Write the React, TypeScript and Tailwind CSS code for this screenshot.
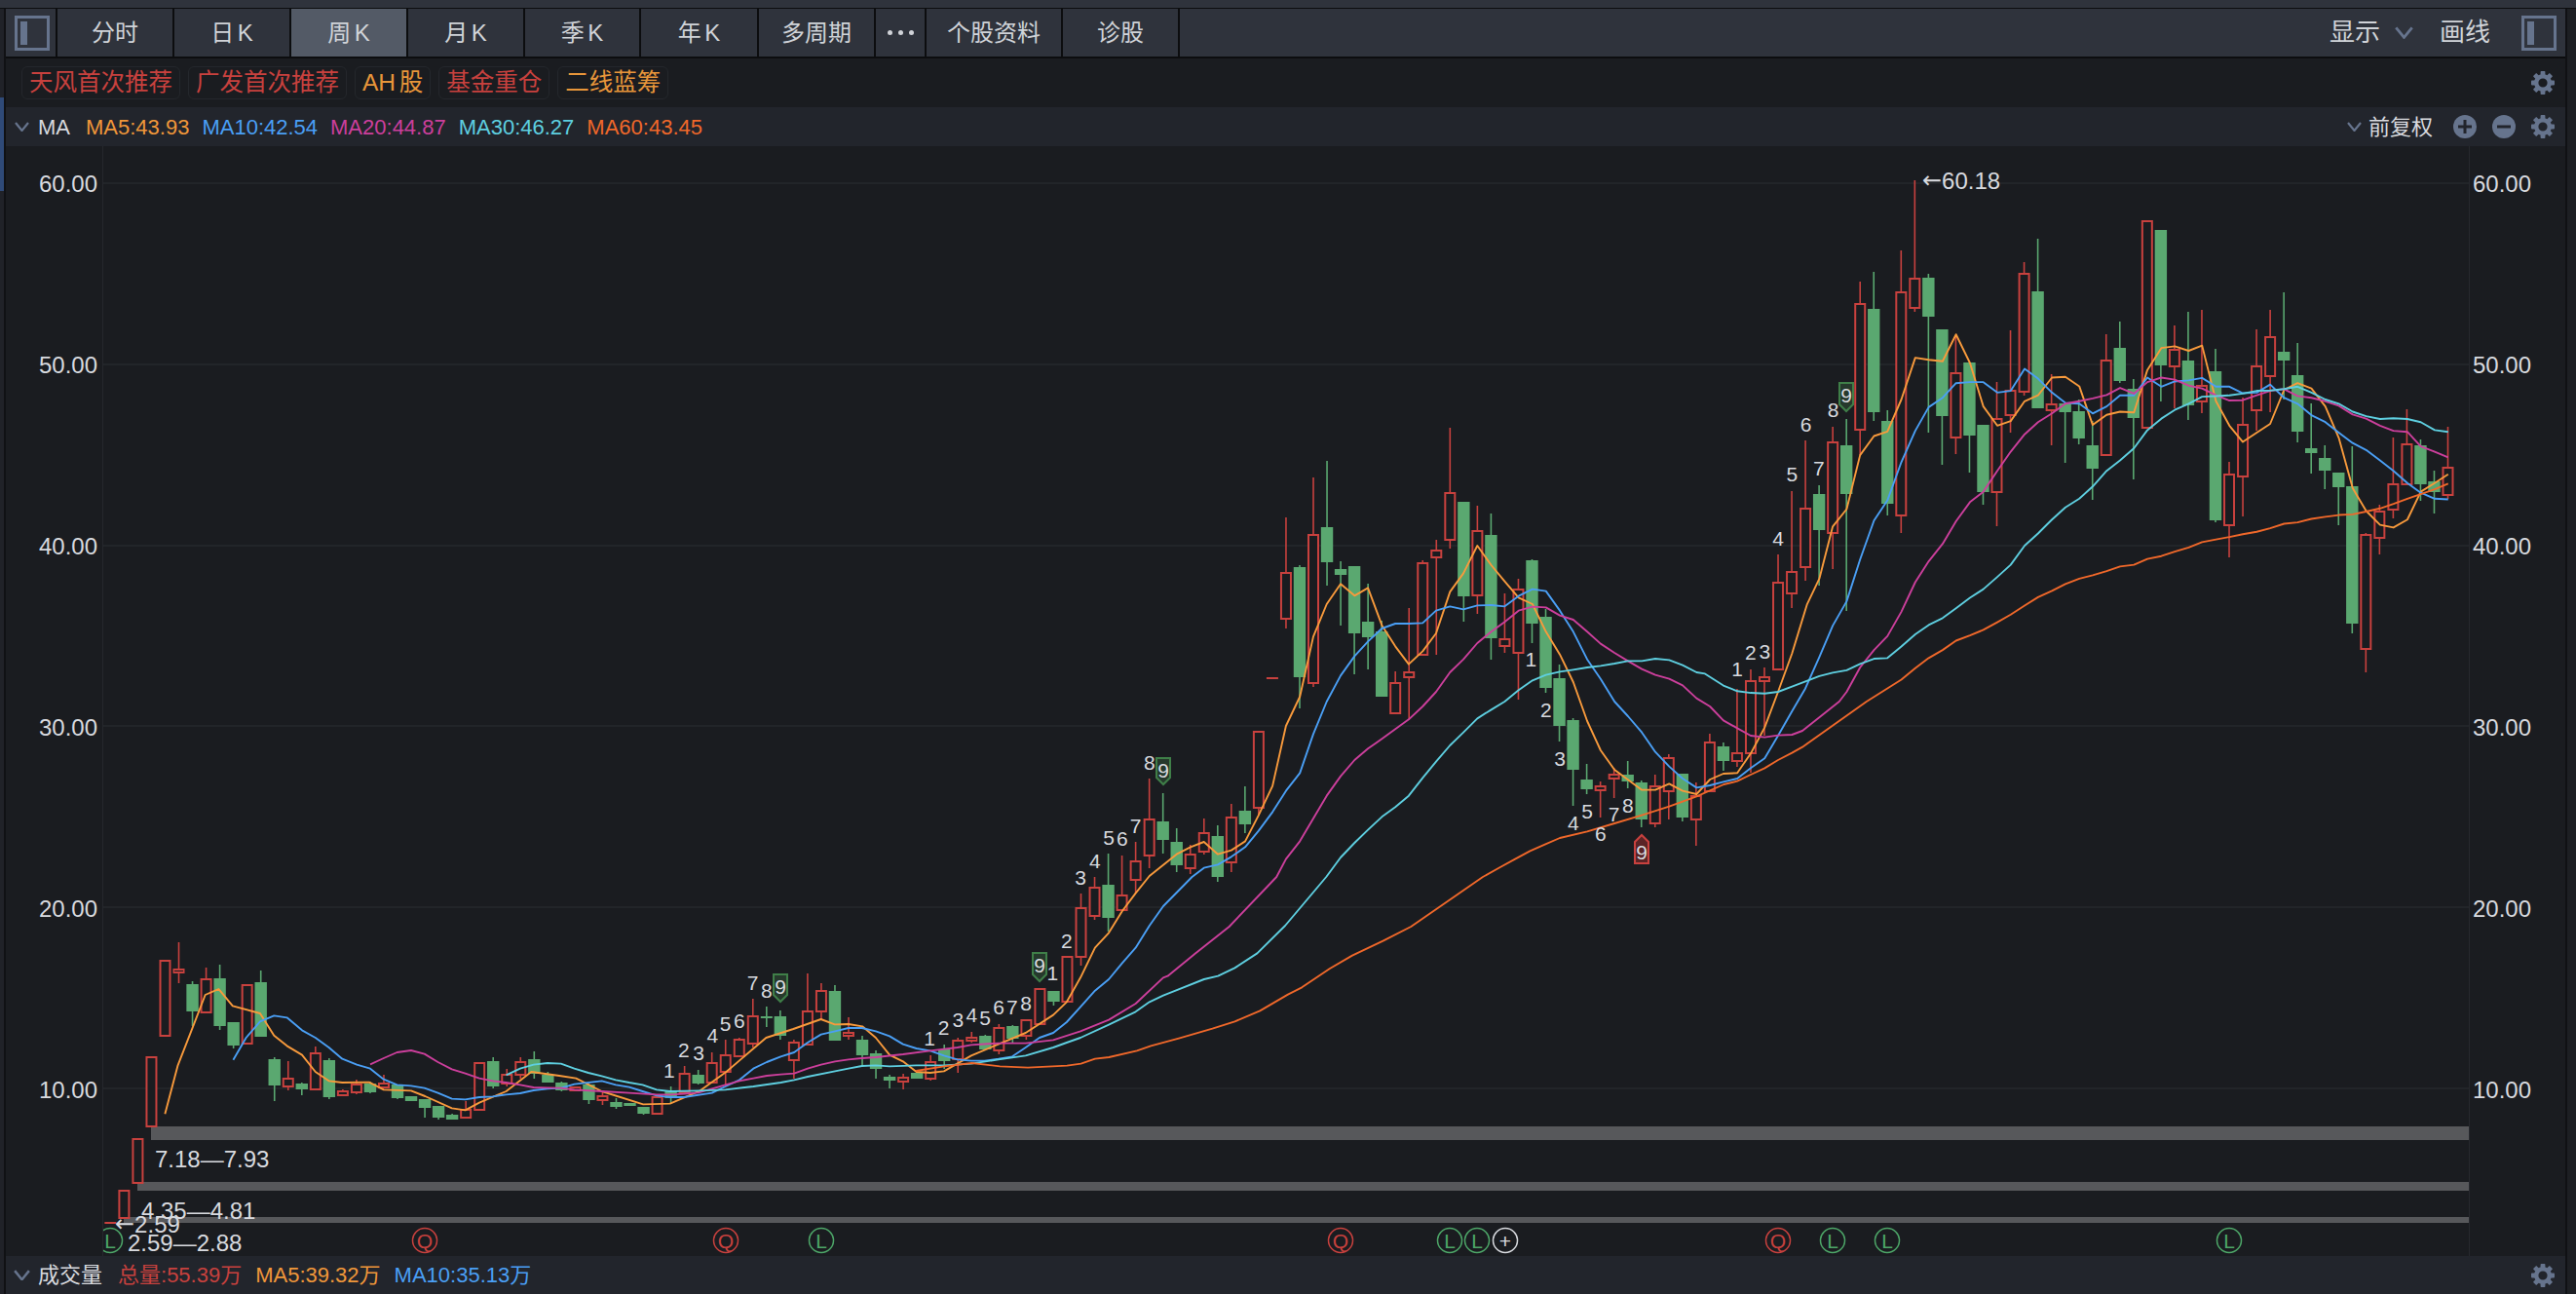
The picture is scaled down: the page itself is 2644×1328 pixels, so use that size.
const UP = "#c8413e";
const DOWN = "#5aa870";
const BG = "#1a1c20";
const INK = "#d8dadf";
const ICON = "#66748d";

type Candle = [string, number, number, number?, number?];

// first entry is the doji left of the first full bar; bars sit 14.03px apart
const candles: Candle[] = [
  ["r", 1254, 1256], ["r", 1222, 1250], ["r", 1169, 1214], ["r", 1085, 1156], ["r", 986, 1063],
  ["r", 995, 998, 967, 1009], ["g", 1010, 1038, 1007, 1053], ["r", 1005, 1039, 993, 1039], ["g", 1004, 1053, 990, 1057],
  ["g", 1049, 1073, 1049, 1076], ["r", 1011, 1071], ["g", 1008, 1064, 996, 1064], ["g", 1087, 1114, 1085, 1130],
  ["r", 1107, 1115, 1089, 1119], ["g", 1112, 1118, 1111, 1124], ["r", 1081, 1118, 1074, 1118], ["g", 1088, 1126, 1086, 1128],
  ["r", 1120, 1124, 1118, 1125], ["r", 1113, 1121, 1108, 1123], ["g", 1112, 1121, 1110, 1122], ["r", 1112, 1116, 1103, 1116],
  ["g", 1113, 1127, 1113, 1128], ["g", 1125, 1130], ["g", 1128, 1137, 1128, 1147], ["g", 1135, 1147, 1135, 1149],
  ["g", 1144, 1149, 1143, 1149], ["r", 1139, 1147, 1130, 1147], ["r", 1091, 1139], ["g", 1089, 1115, 1085, 1117],
  ["r", 1103, 1112, 1097, 1115], ["r", 1090, 1103, 1085, 1107], ["g", 1087, 1102, 1079, 1107], ["g", 1103, 1111, 1100, 1111],
  ["g", 1111, 1119, 1110, 1120], ["r", 1116, 1119, 1116, 1120], ["g", 1113, 1129, 1112, 1133], ["r", 1125, 1129, 1121, 1134],
  ["g", 1131, 1136, 1127, 1138], ["g", 1132, 1135], ["g", 1136, 1143, 1136, 1144], ["r", 1126, 1143, 1123, 1143],
  ["g", 1119, 1127, 1115, 1132], ["r", 1102, 1121, 1094, 1123], ["g", 1103, 1112, 1098, 1113], ["r", 1091, 1111, 1080, 1111],
  ["r", 1083, 1100, 1067, 1113], ["r", 1067, 1084, 1065, 1084], ["r", 1043, 1071, 1025, 1075], ["g", 1043, 1045, 1033, 1054],
  ["g", 1043, 1063, 1037, 1067], ["r", 1070, 1088, 1067, 1107], ["r", 1038, 1072, 999, 1072], ["r", 1017, 1038, 1009, 1046],
  ["g", 1017, 1068, 1011, 1068], ["r", 1060, 1063, 1044, 1067], ["g", 1067, 1083, 1063, 1095], ["g", 1081, 1097, 1078, 1107],
  ["g", 1105, 1109, 1103, 1117], ["r", 1106, 1110, 1102, 1118], ["g", 1101, 1107], ["r", 1090, 1107, 1083, 1109],
  ["g", 1077, 1089, 1072, 1097], ["r", 1068, 1087, 1065, 1101], ["r", 1065, 1068, 1059, 1070], ["g", 1063, 1077, 1062, 1077],
  ["r", 1055, 1078, 1051, 1082], ["g", 1053, 1066, 1052, 1070], ["r", 1047, 1063, 1047, 1067], ["r", 1015, 1051],
  ["g", 1017, 1028, 1017, 1032], ["r", 982, 1028], ["r", 932, 982, 917, 991], ["r", 911, 940, 900, 944],
  ["g", 908, 942, 876, 956], ["r", 919, 934, 878, 934], ["r", 884, 903, 864, 917], ["r", 841, 878, 799, 891],
  ["g", 843, 862, 814, 876], ["g", 864, 888, 850, 895], ["r", 877, 891, 867, 897], ["r", 855, 874, 840, 877],
  ["g", 858, 900, 847, 905], ["r", 839, 885, 825, 895], ["g", 832, 846, 807, 855], ["r", 751, 829, 751, 837],
  ["r", 695, 697], ["r", 588, 635, 531, 645], ["g", 582, 695, 580, 727], ["r", 549, 701, 490, 705],
  ["g", 541, 577, 473, 601], ["g", 584, 590, 576, 642], ["g", 581, 650, 581, 692], ["g", 638, 654, 599, 687],
  ["g", 648, 715, 637, 715], ["r", 701, 732, 689, 732], ["r", 690, 695, 624, 739], ["r", 578, 672, 575, 672],
  ["r", 565, 572, 554, 672], ["r", 506, 554, 439, 563], ["g", 515, 612, 515, 638], ["r", 545, 611, 519, 630],
  ["g", 549, 655, 527, 677], ["r", 656, 663, 609, 670], ["r", 605, 670, 594, 718], ["g", 575, 640, 574, 660],
  ["g", 633, 706, 625, 711], ["g", 696, 745, 682, 761], ["g", 739, 790, 737, 827], ["g", 800, 810, 784, 815],
  ["r", 807, 811, 802, 839], ["r", 795, 799, 788, 819], ["g", 795, 802, 781, 809], ["g", 803, 841, 801, 849],
  ["r", 807, 845, 795, 849], ["r", 778, 812, 774, 841], ["g", 794, 839, 794, 843], ["r", 817, 841, 803, 868],
  ["r", 762, 812, 753, 812], ["g", 766, 781, 762, 791], ["r", 773, 781, 707, 787], ["r", 699, 773, 687, 793],
  ["r", 695, 699, 685, 755], ["r", 598, 687, 569, 687], ["r", 587, 609, 504, 624], ["r", 522, 582, 452, 596],
  ["g", 507, 544, 498, 601], ["r", 454, 547, 438, 584], ["g", 457, 507, 430, 627], ["r", 312, 441, 289, 467],
  ["g", 317, 423, 279, 432], ["g", 432, 517, 421, 529], ["r", 300, 529, 257, 547], ["r", 286, 316, 185, 320],
  ["g", 285, 325, 281, 444], ["g", 338, 427, 338, 477], ["r", 383, 449, 344, 466], ["g", 372, 447, 372, 485],
  ["g", 436, 505, 436, 518], ["r", 430, 505, 392, 540], ["r", 401, 426, 339, 444], ["r", 281, 402, 269, 406],
  ["g", 299, 419, 245, 419], ["r", 415, 421, 384, 457], ["g", 414, 423, 414, 475], ["g", 422, 450, 410, 456],
  ["g", 457, 481, 432, 513], ["r", 370, 467, 343, 467], ["g", 357, 391, 330, 393], ["g", 399, 429, 389, 492],
  ["r", 227, 439], ["g", 236, 375, 236, 412], ["r", 359, 376, 334, 419], ["g", 370, 416, 320, 431],
  ["r", 396, 412, 318, 424], ["g", 381, 534, 358, 536], ["r", 487, 539, 474, 572], ["r", 436, 489, 408, 530],
  ["r", 376, 421, 338, 442], ["r", 346, 386, 318, 423], ["g", 361, 370, 300, 410], ["g", 385, 443, 352, 454],
  ["g", 460, 465, 414, 486], ["g", 470, 483, 457, 502], ["g", 485, 500, 485, 539], ["g", 499, 640, 458, 650],
  ["r", 549, 666, 547, 690], ["r", 525, 552, 518, 569], ["r", 497, 523, 449, 532], ["r", 456, 497, 420, 497],
  ["g", 457, 497, 451, 514], ["g", 494, 505, 483, 527], ["r", 480, 508, 438, 512],
];

type Pt = [number, number];
const map = (ox: number, sx: number, oy: number, sy: number, pts: Pt[]): Pt[] =>
  pts.map(([x, y]) => [ox + x / sx, oy + y / sy]);
const a = (p: Pt[]) => map(0, 1.742, 950, 3, p);
const b = (p: Pt[]) => map(900, 1.742, 950, 3, p);
const c = (p: Pt[]) => map(600, 2.613, 750, 3, p);
const d = (p: Pt[]) => map(1050, 1.96, 400, 3, p);
const e = (p: Pt[]) => map(1750, 1.96, 160, 2.8, p);

const lines: { color: string; pts: Pt[] }[] = [
  {
    color: "#f89a3c",
    pts: [
      ...a([[295, 580], [318, 430], [343, 320], [367, 213], [391, 195], [416, 247], [465, 270], [490, 338], [513, 370], [540, 398], [564, 450], [588, 478], [612, 483], [660, 482], [686, 505], [735, 508], [760, 525], [808, 562], [832, 568], [857, 545], [905, 510], [950, 450], [1000, 462], [1030, 470], [1076, 510], [1150, 550], [1198, 548]]),
      ...c([[310, 1108], [380, 1050], [487, 945], [560, 918], [634, 888], [671, 904], [708, 903], [745, 910], [781, 945], [818, 998], [854, 1018], [890, 1050], [927, 1053], [964, 1048], [1037, 1000], [1110, 965], [1183, 930], [1257, 875], [1293, 835], [1330, 760], [1369, 668], [1406, 622], [1442, 555], [1478, 500], [1515, 447]]),
      ...d([[309, 1430], [337, 1408], [364, 1392], [392, 1430], [419, 1418], [447, 1390], [474, 1310], [502, 1220], [529, 1035], [557, 945], [584, 760], [611, 660], [639, 598], [667, 634], [694, 610], [722, 725], [749, 790], [776, 845], [804, 805], [831, 750], [859, 622], [886, 565], [914, 480], [942, 540], [969, 590], [997, 640], [1025, 660], [1052, 745], [1080, 815], [1107, 900], [1135, 1020], [1162, 1110], [1190, 1170], [1245, 1232], [1272, 1232], [1300, 1213], [1327, 1235], [1355, 1245], [1382, 1200], [1409, 1182], [1437, 1180], [1464, 1120], [1492, 1040], [1519, 930]]),
      ...e([[175, 1430], [205, 1290], [230, 1215], [257, 1065], [285, 1015], [312, 860], [340, 805], [367, 792], [395, 700], [423, 580], [450, 586], [478, 590], [505, 513], [533, 595], [560, 720], [588, 775], [615, 762], [643, 705], [670, 688], [698, 637], [725, 635], [753, 662], [780, 773], [808, 744], [835, 735], [863, 737], [890, 615], [918, 552], [945, 547], [973, 560], [1000, 545], [1028, 705], [1055, 775], [1082, 822], [1110, 795], [1137, 770], [1165, 672], [1192, 653], [1220, 668], [1248, 720], [1275, 810], [1303, 955], [1330, 1020], [1358, 1060], [1385, 1068], [1413, 1045], [1440, 965], [1468, 940], [1495, 915]]),
    ],
  },
  {
    color: "#4a9ff5",
    pts: [
      ...a([[417, 413], [440, 345], [465, 295], [490, 277], [513, 283], [540, 322], [564, 345], [588, 375], [612, 410], [638, 428], [662, 440], [686, 473], [710, 490], [735, 493], [759, 500], [783, 515], [808, 533], [832, 535], [857, 528], [881, 526], [905, 520], [930, 516], [954, 507], [979, 502], [1003, 500], [1027, 488], [1076, 478], [1101, 490], [1125, 497], [1149, 510], [1174, 523], [1198, 528], [1223, 528], [1273, 515], [1297, 495], [1322, 475], [1347, 440], [1371, 420], [1396, 403], [1420, 390], [1444, 360], [1468, 335], [1493, 325], [1517, 315], [1541, 315], [1566, 325]]),
      ...c([[818, 940], [854, 965], [890, 978], [927, 985], [964, 1000], [1000, 1012], [1037, 1016], [1073, 1016], [1110, 1010], [1147, 1003], [1183, 975], [1220, 945], [1257, 930], [1293, 897], [1330, 850], [1369, 800], [1406, 765], [1442, 715], [1478, 668], [1515, 600], [1552, 540]]),
      ...d([[340, 1500], [364, 1472], [392, 1462], [419, 1438], [447, 1408], [474, 1358], [502, 1300], [529, 1235], [557, 1180], [584, 1060], [611, 960], [639, 880], [667, 820], [694, 775], [722, 735], [749, 720], [776, 720], [804, 718], [831, 680], [859, 667], [886, 676], [914, 664], [942, 663], [969, 667], [997, 635], [1025, 614], [1052, 620], [1080, 680], [1107, 745], [1135, 830], [1162, 890], [1190, 960], [1217, 1005], [1245, 1055], [1272, 1115], [1300, 1160], [1327, 1197], [1355, 1225], [1382, 1218], [1409, 1207], [1437, 1197], [1464, 1165], [1492, 1135], [1519, 1065], [1547, 990]]),
      ...e([[202, 1530], [230, 1440], [257, 1350], [285, 1280], [312, 1160], [340, 1048], [367, 990], [395, 880], [423, 790], [450, 722], [478, 695], [505, 653], [533, 650], [560, 650], [588, 680], [615, 675], [643, 612], [670, 640], [698, 680], [725, 710], [753, 712], [780, 740], [808, 720], [835, 688], [863, 688], [890, 637], [918, 663], [945, 648], [973, 645], [1000, 638], [1028, 663], [1055, 663], [1082, 682], [1110, 680], [1137, 657], [1165, 695], [1192, 712], [1220, 745], [1248, 765], [1275, 795], [1303, 825], [1330, 845], [1358, 875], [1385, 905], [1413, 940], [1440, 968], [1468, 985], [1495, 987]]),
    ],
  },
  {
    color: "#cc3f9c",
    pts: [
      ...a([[662, 427], [686, 408], [710, 390], [735, 384], [759, 395], [783, 420], [808, 442], [832, 455], [857, 470], [881, 478], [905, 483], [930, 490], [954, 498], [979, 499], [1003, 500], [1027, 505], [1076, 510], [1125, 515], [1174, 520], [1198, 520], [1223, 518], [1249, 514], [1297, 490], [1322, 478], [1347, 470], [1371, 462], [1396, 458], [1420, 455], [1444, 440], [1468, 428], [1493, 418], [1517, 412], [1541, 408], [1566, 405]]),
      ...c([[854, 996], [927, 985], [1000, 975], [1037, 967], [1110, 962], [1183, 962], [1257, 952], [1330, 925], [1406, 890], [1478, 840], [1552, 760]]),
      ...b([[520, 155], [570, 85], [630, 3]]),
      ...d([[510, 1500], [529, 1445], [557, 1390], [584, 1320], [611, 1250], [639, 1190], [667, 1140], [694, 1105], [722, 1075], [749, 1045], [776, 1015], [804, 975], [831, 930], [859, 870], [886, 830], [914, 780], [942, 745], [969, 715], [997, 680], [1025, 668], [1052, 670], [1080, 695], [1107, 708], [1135, 745], [1162, 782], [1190, 810], [1217, 835], [1245, 860], [1272, 878], [1300, 890], [1327, 910], [1355, 950], [1382, 975], [1409, 1018], [1437, 1042], [1464, 1065], [1492, 1070], [1519, 1064], [1547, 1062], [1568, 1050]]),
      ...e([[270, 1568], [285, 1540], [312, 1470], [340, 1420], [367, 1380], [395, 1310], [423, 1225], [450, 1165], [478, 1115], [505, 1050], [533, 995], [560, 965], [588, 905], [615, 850], [643, 800], [670, 765], [698, 740], [725, 712], [753, 705], [780, 697], [808, 687], [835, 667], [863, 683], [890, 650], [918, 637], [945, 643], [973, 660], [1000, 668], [1028, 688], [1055, 703], [1082, 702], [1110, 688], [1137, 675], [1165, 670], [1192, 690], [1220, 695], [1248, 705], [1275, 718], [1303, 743], [1330, 755], [1358, 775], [1385, 790], [1413, 793], [1440, 835], [1468, 850], [1495, 866]]),
    ],
  },
  {
    color: "#5ecfe0",
    pts: [
      ...a([[905, 460], [930, 440], [954, 428], [979, 423], [1003, 425], [1027, 440], [1052, 453], [1076, 463], [1101, 475], [1125, 483], [1149, 490], [1174, 505], [1198, 510], [1249, 508], [1297, 505], [1347, 495], [1396, 483], [1420, 475], [1444, 465], [1493, 448], [1517, 440], [1541, 432], [1566, 430]]),
      ...c([[818, 1033], [890, 1030], [964, 1030], [1037, 1025], [1110, 1012], [1183, 1000], [1257, 975], [1293, 960], [1330, 945], [1406, 905], [1478, 865], [1515, 835], [1552, 815]]),
      ...b([[585, 165], [610, 155], [640, 130], [680, 85], [730, 0]]),
      ...d([[610, 1500], [639, 1440], [667, 1395], [694, 1355], [722, 1315], [749, 1285], [776, 1250], [804, 1195], [831, 1145], [859, 1095], [886, 1055], [914, 1012], [942, 985], [969, 960], [997, 925], [1025, 895], [1052, 878], [1080, 868], [1107, 862], [1135, 855], [1162, 850], [1190, 843], [1217, 835], [1245, 835], [1272, 828], [1300, 832], [1327, 848], [1355, 870]]),
      ...e([[0, 1488], [37, 1522], [65, 1538], [92, 1543], [120, 1545], [147, 1540], [175, 1525], [202, 1510], [230, 1495], [257, 1485], [285, 1478], [312, 1460], [340, 1445], [367, 1443], [395, 1410], [423, 1375], [450, 1348], [478, 1328], [505, 1300], [533, 1270], [560, 1245], [588, 1210], [615, 1175], [643, 1120], [670, 1085], [698, 1045], [725, 1010], [753, 985], [780, 950], [808, 905], [835, 875], [863, 840], [890, 788], [918, 755], [945, 730], [973, 712], [1000, 692], [1028, 690], [1055, 688], [1082, 683], [1110, 675], [1137, 674], [1165, 670], [1192, 663], [1220, 680], [1248, 700], [1275, 712], [1303, 735], [1330, 748], [1358, 756], [1385, 754], [1413, 756], [1440, 765], [1468, 788], [1495, 793]]),
    ],
  },
  {
    color: "#f0682a",
    pts: [
      ...b([[70, 447], [120, 433], [170, 423], [220, 433], [270, 437], [340, 431], [365, 425], [390, 410], [415, 405], [465, 385], [490, 370], [540, 347], [600, 317], [640, 295], [685, 262], [735, 212], [760, 190], [810, 132], [850, 92], [905, 47], [955, 3]]),
      ...d([[925, 1500], [960, 1470], [990, 1445], [1020, 1420], [1050, 1400], [1080, 1380], [1135, 1360], [1190, 1335], [1245, 1310], [1300, 1283], [1355, 1252], [1410, 1215], [1437, 1205], [1464, 1185], [1492, 1165], [1519, 1140], [1547, 1118], [1568, 1100]]),
      ...e([[325, 1568], [367, 1530], [395, 1505], [423, 1472], [450, 1443], [478, 1420], [505, 1393], [533, 1378], [560, 1362], [588, 1340], [615, 1318], [643, 1292], [670, 1268], [698, 1250], [725, 1230], [753, 1215], [780, 1205], [808, 1193], [835, 1180], [863, 1175], [890, 1158], [918, 1150], [945, 1137], [973, 1125], [1000, 1110], [1028, 1102], [1055, 1095], [1082, 1087], [1110, 1080], [1137, 1070], [1165, 1057], [1192, 1053], [1220, 1043], [1248, 1037], [1275, 1032], [1303, 1030], [1330, 1022], [1358, 1013], [1385, 1000], [1413, 985], [1440, 972], [1468, 958], [1495, 942]]),
    ],
  },
];

const digits: [string, Pt][] = [
  ...(["1", "2", "3", "4", "5", "6", "7", "8"].map((t, i) => [t, c([[[227, 1045], [266, 982], [306, 992], [343, 938], [378, 900], [415, 893], [451, 775], [488, 798]][i] as Pt])[0]]) as [string, Pt][]),
  ...(["1", "2", "3", "4", "5", "6", "7", "8", "1", "2", "3", "4", "5", "6", "7", "8"].map((t, i) => [t, c([[[925, 945], [963, 912], [1002, 890], [1038, 875], [1074, 882], [1111, 850], [1147, 850], [1184, 838], [1255, 745], [1293, 645], [1330, 450], [1369, 400], [1406, 327], [1442, 332], [1478, 292], [1515, 97]][i] as Pt])[0]]) as [string, Pt][]),
  ...(["1", "2", "3", "4", "5", "6", "7", "8", "1", "2", "3", "4", "5"].map((t, i) => [t, d([[[1022, 830], [1052, 985], [1080, 1135], [1107, 1332], [1135, 1297], [1162, 1367], [1189, 1307], [1217, 1278], [1437, 860], [1464, 808], [1492, 805], [1519, 457], [1547, 260]][i] as Pt])[0]]) as [string, Pt][]),
  ...(["6", "7", "8"].map((t, i) => [t, e([[[203, 770], [229, 896], [258, 730]][i] as Pt])[0]]) as [string, Pt][]),
];

const notes: { t: string; x: number; y: number; arrow?: boolean }[] = [
  { t: "7.18—7.93", x: 159, y: 1189 },
  { t: "4.35—4.81", x: 145, y: 1242 },
  { t: "2.59", x: 118, y: 1256, arrow: true },
  { t: "2.59—2.88", x: 131, y: 1275 },
  { t: "60.18", x: 1973, y: 185, arrow: true },
];

const marks: [string, number][] = [
  ["L", 113], ["Q", 436], ["Q", 745], ["L", 843], ["Q", 1376], ["L", 1488], ["L", 1516], ["+", 1545],
  ["Q", 1825], ["L", 1881], ["L", 1937], ["L", 2288],
];

function Flag({ x, y0, y1, up }: { x: number; y0: number; y1: number; up?: boolean }) {
  const pts = up
    ? `${x - 7},${y0 + 7} ${x},${y0} ${x + 7},${y0 + 7} ${x + 7},${y1} ${x - 7},${y1}`
    : `${x - 7},${y0} ${x + 7},${y0} ${x + 7},${y1 - 7} ${x},${y1} ${x - 7},${y1 - 7}`;
  return (
    <g>
      <polygon points={pts} fill={up ? "#5a2426" : "#26392c"} stroke={up ? "#c8413e" : "#3f7f48"} strokeWidth="2" />
      <text x={x} y={up ? y0 + 17 : y0 + 12} textAnchor="middle" dominantBaseline="central" className="fill-[#d8dadf] text-[21px]">
        9
      </text>
    </g>
  );
}

function Chart() {
  return (
    <svg viewBox="106 150 2428 1139" className="block h-full w-full" preserveAspectRatio="none">
      {[188, 374, 560, 745, 931, 1117].map((y) => (
        <line key={y} x1="106" x2="2534" y1={y} y2={y} stroke="#26282d" strokeWidth="1.5" />
      ))}
      <rect x="155" y="1156" width="2379" height="14" fill="#57585b" />
      <rect x="141" y="1213" width="2393" height="9" fill="#57585b" />
      <rect x="127" y="1249" width="2407" height="6" fill="#57585b" />
      {candles.map(([k, top, bot, hi, lo], n) => {
        const x = 127.4 + 14.03 * (n - 1);
        const col = k === "r" ? UP : DOWN;
        return (
          <g key={n}>
            {hi !== undefined && <line x1={x} x2={x} y1={hi} y2={lo} stroke={col} strokeWidth="1.6" />}
            {bot - top <= 2 ? (
              <rect x={x - 6} y={top} width="12" height="2" fill={col} />
            ) : k === "r" ? (
              <rect x={x - 5} y={top} width="10" height={bot - top} fill={BG} stroke={col} strokeWidth="2" />
            ) : (
              <rect x={x - 6.2} y={top} width="12.4" height={bot - top} fill={col} />
            )}
          </g>
        );
      })}
      {lines.map((l) => (
        <polyline
          key={l.color}
          points={l.pts.map((p) => p.join(",")).join(" ")}
          fill="none"
          stroke={l.color}
          strokeWidth="1.9"
          strokeLinejoin="round"
        />
      ))}
      {digits.map(([t, p], n) => (
        <text key={n} x={p[0]} y={p[1]} textAnchor="middle" dominantBaseline="central" className="fill-[#d8dadf] text-[21px]">
          {t}
        </text>
      ))}
      <Flag x={801} y0={1000} y1={1028} />
      <Flag x={1067} y0={978} y1={1007} />
      <Flag x={1194} y0={778} y1={805} />
      <Flag x={1895} y0={393} y1={422} />
      <Flag x={1685} y0={857} y1={886} up />
      {notes.map((n) => (
        <text key={n.t} x={n.x} y={n.y} dominantBaseline="central" className="fill-[#d8dadf] text-[24px]">
          {n.arrow && <tspan className="[font-family:'DejaVu_Sans',sans-serif]">←</tspan>}
          {n.t}
        </text>
      ))}
      {marks.map(([t, x], n) => {
        const col = t === "Q" ? UP : t === "L" ? "#4da668" : INK;
        return (
          <g key={n}>
            <circle cx={x} cy="1273" r="12.5" fill={BG} stroke={col} strokeWidth="1.5" />
            <text x={x} y="1273" textAnchor="middle" dominantBaseline="central" className="text-[21px]" fill={col}>
              {t}
            </text>
          </g>
        );
      })}
    </svg>
  );
}

function PanelIcon() {
  return (
    <div className="flex h-9 w-9 items-stretch border-[3px] border-[#66748d] p-[3px]">
      <div className="w-[7px] bg-[#66748d]" />
    </div>
  );
}

function Chevron({ w = 15 }: { w?: number }) {
  return (
    <svg width={w} height={w * 0.7} viewBox="0 0 15 10.5" fill="none" stroke={ICON} strokeWidth="2.2">
      <path d="M1 1l6.5 8L14 1" />
    </svg>
  );
}

function Gear() {
  return (
    <svg width="24" height="24" viewBox="0 0 24 24" fill={ICON}>
      {[0, 45, 90, 135, 180, 225, 270, 315].map((r) => (
        <rect key={r} x="9.6" y="0" width="4.8" height="5" rx="0.8" transform={`rotate(${r} 12 12)`} />
      ))}
      <circle cx="12" cy="12" r="6.8" fill="none" stroke={ICON} strokeWidth="4.4" />
    </svg>
  );
}

function RoundBtn({ plus }: { plus?: boolean }) {
  return (
    <svg width="24" height="24" viewBox="0 0 24 24">
      <circle cx="12" cy="12" r="12" fill={ICON} />
      <rect x="5" y="10.5" width="14" height="3" fill="#22252c" />
      {plus && <rect x="10.5" y="5" width="3" height="14" fill="#22252c" />}
    </svg>
  );
}

const tabs = [
  { t: "分时", w: "w-[120px]" },
  { t: "日 K", w: "w-[120px]" },
  { t: "周 K", w: "w-[120px]", on: true },
  { t: "月 K", w: "w-[120px]" },
  { t: "季 K", w: "w-[119px]" },
  { t: "年 K", w: "w-[121px]" },
  { t: "多周期", w: "w-[120px]" },
  { t: "诊股", w: "w-[120px]" },
];

const tags = [
  { t: "天风首次推荐", c: "text-[#c8413e]" },
  { t: "广发首次推荐", c: "text-[#c8413e]" },
  { t: "AH 股", c: "text-[#e8963a]" },
  { t: "基金重仓", c: "text-[#c8413e]" },
  { t: "二线蓝筹", c: "text-[#e8963a]" },
];

const axis = ["60.00", "50.00", "40.00", "30.00", "20.00", "10.00"];

function Tab({ label, w, on }: { label: string; w: string; on?: boolean }) {
  return (
    <div className={`flex items-center justify-center border-r-2 border-[#0c0d0f] [word-spacing:-3px] ${w} ${on ? "bg-[#535a66]" : ""}`}>
      {label}
    </div>
  );
}

export default function App() {
  return (
    <div className="flex h-[1328px] w-[2644px] flex-col overflow-hidden bg-[#1a1c20] [font-family:'Liberation_Sans','Noto_Sans_CJK_SC',sans-serif] text-[#d8dadf]">
      <div className="h-2 shrink-0 bg-[#2f333c]" />
      <div className="h-px shrink-0 bg-[#0c0d0f]" />
      <div className="flex min-h-0 flex-1">
        <div className="flex w-[6px] shrink-0 flex-col border-r-2 border-[#101114] bg-[#202228]">
          <div className="mt-[91px] h-[96px] bg-[#2f4a78]" />
        </div>

        <div className="flex min-w-0 flex-1 flex-col">
          <div className="flex h-[49px] shrink-0 items-stretch bg-[#2f333c] text-[24px] text-[#d0d3d8]">
            <div className="flex w-[53px] items-center justify-center border-r-2 border-[#0c0d0f] pl-[3px]">
              <PanelIcon />
            </div>
            {tabs.slice(0, 7).map((x) => (
              <Tab key={x.t} label={x.t} w={x.w} on={x.on} />
            ))}
            <div className="flex w-[52px] items-center justify-center gap-[6px] border-r-2 border-[#0c0d0f]">
              <div className="h-[5px] w-[5px] rounded-full bg-[#d0d3d8]" />
              <div className="h-[5px] w-[5px] rounded-full bg-[#d0d3d8]" />
              <div className="h-[5px] w-[5px] rounded-full bg-[#d0d3d8]" />
            </div>
            <Tab label="个股资料" w="w-[140px]" />
            <Tab label="诊股" w="w-[120px]" />
            <div className="flex flex-1 items-center justify-end pr-[9px] text-[26px]">
              <span>显示</span>
              <span className="ml-[15px]">
                <Chevron w={19} />
              </span>
              <span className="ml-[27px]">画线</span>
              <span className="ml-[32px]">
                <PanelIcon />
              </span>
            </div>
          </div>
          <div className="h-[2px] shrink-0 bg-[#0c0d0f]" />

          <div className="flex h-[50px] shrink-0 items-center pl-[16px] pr-[11px] text-[24.5px]">
            <div className="flex flex-1 gap-[8px]">
              {tags.map((x) => (
                <div
                  key={x.t}
                  className={`flex h-[34px] items-center rounded-[6px] border border-[#24272c] px-[7px] [word-spacing:-3px] ${x.c}`}
                >
                  {x.t}
                </div>
              ))}
            </div>
            <Gear />
          </div>

          <div className="flex h-[40px] shrink-0 items-center bg-[#22252c] pl-[9px] pr-[11px] text-[22px]">
            <Chevron />
            <span className="ml-[9px]">MA</span>
            <div className="ml-[16px] flex flex-1 gap-[13px]">
              <span className="text-[#f0973a]">MA5:43.93</span>
              <span className="text-[#4a9ff5]">MA10:42.54</span>
              <span className="text-[#cc3f9c]">MA20:44.87</span>
              <span className="text-[#5ecfe0]">MA30:46.27</span>
              <span className="text-[#f0682a]">MA60:43.45</span>
            </div>
            <Chevron />
            <span className="ml-[7px]">前复权</span>
            <div className="ml-[21px] flex gap-[16px]">
              <RoundBtn plus />
              <RoundBtn />
              <Gear />
            </div>
          </div>

          <div className="flex min-h-0 flex-1">
            <div className="flex w-[100px] shrink-0 flex-col gap-[156px] border-r border-[#26282d] pr-[5px] pt-[24px] text-right text-[24px]">
              {axis.map((t) => (
                <div key={t} className="h-[30px] leading-[30px]">
                  {t}
                </div>
              ))}
            </div>
            <div className="min-w-0 flex-1">
              <Chart />
            </div>
            <div className="flex w-[99px] shrink-0 flex-col gap-[156px] border-l border-[#26282d] pl-[3px] pt-[24px] text-[24px]">
              {axis.map((t) => (
                <div key={t} className="h-[30px] leading-[30px]">
                  {t}
                </div>
              ))}
            </div>
          </div>

          <div className="flex h-[39px] shrink-0 items-center bg-[#22252c] pl-[8px] pr-[11px] text-[22px]">
            <Chevron w={17} />
            <span className="ml-[8px]">成交量</span>
            <div className="ml-[16px] flex flex-1 gap-[14px]">
              <span className="text-[#c8413e]">总量:55.39万</span>
              <span className="text-[#f0973a]">MA5:39.32万</span>
              <span className="text-[#4a9ff5]">MA10:35.13万</span>
            </div>
            <Gear />
          </div>
        </div>

        <div className="w-[11px] shrink-0 border-l-2 border-[#101114] bg-[#1d1f23]" />
      </div>
    </div>
  );
}
